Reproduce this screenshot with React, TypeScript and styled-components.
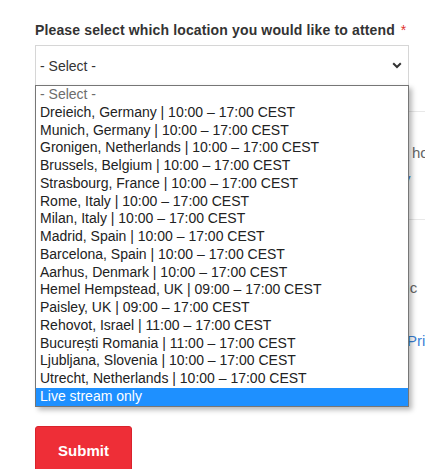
import React from "react";
import styled, { createGlobalStyle } from "styled-components";

const Global = createGlobalStyle`
  html, body { margin: 0; padding: 0; background: #fff; overflow: hidden; }
  body { font-family: "Liberation Sans", Arial, sans-serif; }
`;

const Page = styled.div`
  width: 425px;
  height: 469px;
  overflow: hidden;
  padding: 19px 0 0 35px;
  box-sizing: border-box;
`;

const Label = styled.div`
  font-size: 14px;
  font-weight: 700;
  color: #333;
  letter-spacing: 0.14px;
  line-height: 20px;
  padding-top: 1px;
  white-space: nowrap;
  margin-bottom: 5px;
`;

const Required = styled.span`
  color: #e0312f;
  font-weight: 400;
  margin-left: 6px;
`;

const Field = styled.div`
  position: relative;
  width: 374px;
`;

const SelectBox = styled.div`
  box-sizing: border-box;
  height: 40px;
  border: 1px solid #d6d6d6;
  border-bottom: none;
  display: flex;
  align-items: center;
  justify-content: space-between;
  padding: 0 6px 0 4px;
  font-size: 14px;
  color: #333;
  background: #fff;
`;

const Dropdown = styled.ul`
  position: absolute;
  top: 40px;
  left: 0;
  width: 374px;
  box-sizing: border-box;
  margin: 0;
  padding: 0;
  list-style: none;
  background: #fff;
  border: 1px solid #767676;
  box-shadow: 3px 3px 5px rgba(0, 0, 0, 0.28);
  z-index: 2;
`;

const Option = styled.li<{ $muted?: boolean; $active?: boolean }>`
  height: 17.78px;
  line-height: 17.78px;
  padding-left: 4px;
  font-size: 14px;
  white-space: nowrap;
  color: ${(p) => (p.$active ? "#fff" : p.$muted ? "#6d6d6d" : "#222")};
  background: ${(p) => (p.$active ? "#1e90ff" : "transparent")};
`;

const Behind = styled.div`
  height: 321px;
  display: flex;
  flex-direction: column;
  width: 400px;
`;

const Rule = styled.div<{ $top: number }>`
  margin-top: ${(p) => p.$top}px;
  height: 1px;
  background: #e8e8e8;
`;

const Tail = styled.div<{ $top: number; $indent: number; $link?: boolean }>`
  margin-top: ${(p) => p.$top}px;
  padding-left: ${(p) => p.$indent}px;
  font-size: 15px;
  line-height: 18px;
  white-space: nowrap;
  color: ${(p) => (p.$link ? "#3b82d6" : "#666")};
`;

const Submit = styled.button`
  margin-top: 20px;
  width: 97px;
  height: 48px;
  background: #ee2e37;
  border: 1px solid #d9232c;
  border-radius: 3px;
  color: #fff;
  font-family: "Liberation Sans", Arial, sans-serif;
  font-weight: 700;
  font-size: 15px;
  padding: 0;
  cursor: pointer;
`;

const options = [
  "Dreieich, Germany | 10:00 – 17:00 CEST",
  "Munich, Germany | 10:00 – 17:00 CEST",
  "Gronigen, Netherlands | 10:00 – 17:00 CEST",
  "Brussels, Belgium | 10:00 – 17:00 CEST",
  "Strasbourg, France | 10:00 – 17:00 CEST",
  "Rome, Italy | 10:00 – 17:00 CEST",
  "Milan, Italy | 10:00 – 17:00 CEST",
  "Madrid, Spain | 10:00 – 17:00 CEST",
  "Barcelona, Spain | 10:00 – 17:00 CEST",
  "Aarhus, Denmark | 10:00 – 17:00 CEST",
  "Hemel Hempstead, UK | 09:00 – 17:00 CEST",
  "Paisley, UK | 09:00 – 17:00 CEST",
  "Rehovot, Israel | 11:00 – 17:00 CEST",
  "București Romania | 11:00 – 17:00 CEST",
  "Ljubljana, Slovenia | 10:00 – 17:00 CEST",
  "Utrecht, Netherlands | 10:00 – 17:00 CEST",
];

const Chevron = () => (
  <svg width="10" height="7" viewBox="0 0 10 7">
    <path d="M1.2 1.3 L5 5 L8.8 1.3" fill="none" stroke="#333" strokeWidth="2" />
  </svg>
);

export default function App() {
  return (
    <>
      <Global />
      <Page>
        <Label>
          Please select which location you would like to attend
          <Required>*</Required>
        </Label>
        <Field>
          <SelectBox>
            <span>- Select -</span>
            <Chevron />
          </SelectBox>
          <Dropdown>
            <Option $muted>- Select -</Option>
            {options.map((o) => (
              <Option key={o}>{o}</Option>
            ))}
            <Option $active>Live stream only</Option>
          </Dropdown>
          <Behind>
            <Rule $top={26} />
            <Tail $top={32} $indent={377}>how we use your data</Tail>
            <Tail $top={8} $indent={328} $link>privacy</Tail>
            <Rule $top={31} />
            <Tail $top={59} $indent={343}>public</Tail>
            <Tail $top={35} $indent={372} $link>Privacy Policy</Tail>
          </Behind>
          <Submit>Submit</Submit>
        </Field>
      </Page>
    </>
  );
}
